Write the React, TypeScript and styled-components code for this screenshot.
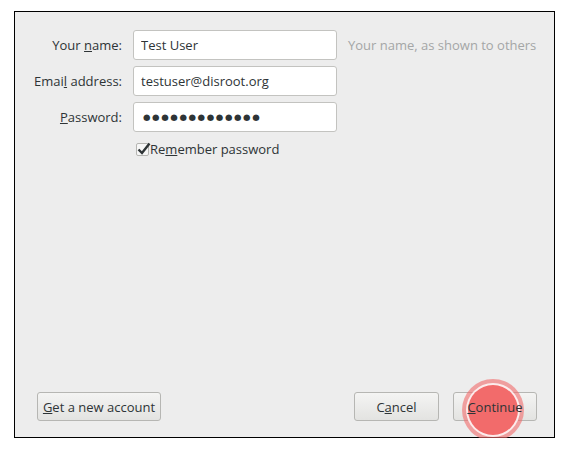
import styled, { createGlobalStyle } from 'styled-components';

const GlobalStyle = createGlobalStyle`
  body {
    margin: 0;
    background: #ffffff;
    font-family: 'Open Sans', 'DejaVu Sans', sans-serif;
    font-size: 13px;
    color: #2e3436;
  }
`;

const Dialog = styled.div`
  box-sizing: border-box;
  margin: 11px 0 0 14px;
  width: 541px;
  height: 427px;
  border: 1px solid #000;
  background: #ededed;
  display: flex;
  flex-direction: column;
  justify-content: space-between;
  padding: 18px 17px 16px 0;
`;

const Form = styled.div`
  display: grid;
  grid-template-columns: 107px 204px auto;
  column-gap: 11px;
  row-gap: 6px;
  align-items: center;
`;

const Label = styled.label`
  text-align: right;
  white-space: nowrap;
`;

const Input = styled.input<{ $secret?: boolean }>`
  box-sizing: border-box;
  height: 30px;
  width: 204px;
  padding: 0 7px;
  border: 1px solid #c3c3c0;
  border-radius: 3px;
  background: #fff;
  font: inherit;
  color: #2e3436;
  outline: none;
  ${({ $secret }) =>
    $secret &&
    `
    font-family: 'DejaVu Sans', sans-serif;
    font-size: 8.6px;
    letter-spacing: 1.6px;
    padding-left: 9px;
  `}
`;

const Hint = styled.span`
  color: #a4a6a6;
  white-space: nowrap;
`;

const CheckRow = styled.label`
  grid-column: 2 / 4;
  display: flex;
  align-items: center;
  margin-top: 2px;
  padding-left: 3px;
`;

const Box = styled.span`
  box-sizing: border-box;
  width: 13px;
  height: 13px;
  border: 1px solid #b5b5b2;
  border-radius: 2px;
  background: #f6f6f6;
  position: relative;
  margin-right: 1px;

  svg {
    position: absolute;
    left: -1px;
    top: -3px;
  }
`;

const Footer = styled.div`
  display: flex;
  align-items: center;
  padding-left: 22px;
`;

const Spacer = styled.div`
  flex: 1;
`;

const Button = styled.button<{ $w: number }>`
  box-sizing: border-box;
  height: 29px;
  width: ${({ $w }) => $w}px;
  border: 1px solid #b6b6b3;
  border-radius: 3px;
  background: linear-gradient(#f4f4f3, #e3e3e1);
  font: inherit;
  color: #2e3436;
  padding: 0;
  position: relative;

  & + & {
    margin-left: 14px;
  }
`;

const Touch = styled.span`
  position: absolute;
  left: 8px;
  top: -14px;
  width: 62px;
  height: 62px;
  border-radius: 50%;
  background: rgba(240, 110, 110, 0.62);
  pointer-events: none;

  &::after {
    content: '';
    position: absolute;
    left: 6px;
    top: 6px;
    width: 50px;
    height: 50px;
    border-radius: 50%;
    background: #f26b6b;
    box-shadow: 0 0 0 2px rgba(255, 255, 255, 0.8);
  }
`;

const ButtonText = styled.span`
  position: relative;
`;

const Mn = ({ children }: { children: string }) => <u>{children}</u>;

const App = () => {
  return (
    <>
      <GlobalStyle />
      <Dialog>
        <Form>
          <Label>
            Your <Mn>n</Mn>ame:
          </Label>
          <Input defaultValue="Test User" />
          <Hint>Your name, as shown to others</Hint>

          <Label>
            Emai<Mn>l</Mn> address:
          </Label>
          <Input defaultValue="testuser@disroot.org" />
          <span />

          <Label>
            <Mn>P</Mn>assword:
          </Label>
          <Input $secret readOnly value={'\u25CF'.repeat(13)} />
          <span />

          <span />
          <CheckRow>
            <Box>
              <svg width="16" height="16" viewBox="0 0 16 16">
                <path
                  d="M2.5 8.5 L6 12 L13.5 2.5"
                  fill="none"
                  stroke="#2e3436"
                  strokeWidth="2.4"
                />
              </svg>
            </Box>
            Re<Mn>m</Mn>ember password
          </CheckRow>
        </Form>

        <Footer>
          <Button $w={124}>
            <Mn>G</Mn>et a new account
          </Button>
          <Spacer />
          <Button $w={85}>
            C<Mn>a</Mn>ncel
          </Button>
          <Button $w={84}>
            <Touch />
            <ButtonText>
              <Mn>C</Mn>ontinue
            </ButtonText>
          </Button>
        </Footer>
      </Dialog>
    </>
  );
};

export default App;
